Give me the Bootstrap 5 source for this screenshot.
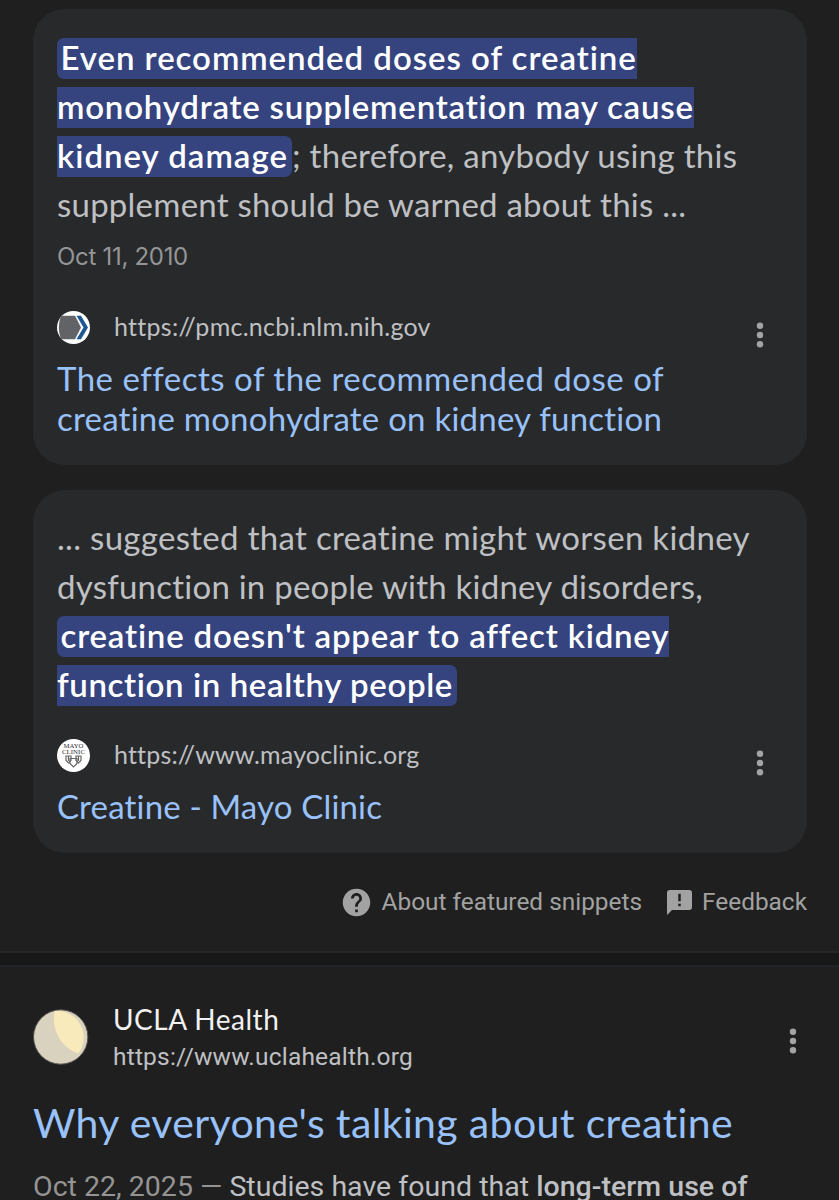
<!DOCTYPE html>
<html lang="en" data-bs-theme="dark">
<head>
<meta charset="utf-8">
<meta name="viewport" content="width=device-width, initial-scale=1">
<title>Search results</title>
<link href="https://cdn.jsdelivr.net/npm/bootstrap@5.3.0/dist/css/bootstrap.min.css" rel="stylesheet">
<style>
body{background:#1f1f1f;color:#bfc0c3;font-family:Lato,"Liberation Sans",sans-serif;height:1200px;overflow:hidden}
.wrap{padding:9px 32px 0 33px}
.snippet{background:#28292b;border:0;border-radius:32px;padding:25px 24px 0 24px;height:456px}
.snippet.short{height:363px;margin-top:25px;padding-top:24px}
.line{height:49px;font-size:33px;white-space:pre}
.line span{height:41px;line-height:39px}
.hl{background:#35447f;color:#fff;font-weight:600}
.hl-start{border-radius:7px 0 0 7px;padding-left:3.5px}
.hl-end{border-radius:0 7px 7px 0;padding-right:4px}
.date{font:400 24px/30px Inter,sans-serif;letter-spacing:-.3px;color:#949597;margin-top:12px;height:30px}
.source{height:33px;font-size:25px;line-height:33px}
.card-one .source{margin-top:39px}
.card-two .source{margin-top:29px}
.source svg.fav{width:33px;height:33px;flex:none}
.source .url{margin-left:24px;position:relative;top:-1px}
.kebab{width:8px;height:26px;fill:#a2a3a5;flex:none}
.source .kebab{margin-right:19px;position:relative;top:7.5px}
.headline{color:#99c1fa;font-size:33px;line-height:40.7px;text-decoration:none;white-space:nowrap;margin-top:13.5px;display:block}
.roboto{font-family:Roboto,sans-serif}
.foot{height:98px;font-size:24.4px;color:#a2a2a2;padding-top:33px;line-height:32px}
.foot svg{fill:#a2a2a2;flex:none}
.foot .gap-q{margin-left:8.5px}
.foot .flag{margin:4px 0 0 24.5px}
.foot .gap-f{margin-left:10.5px}
.sep{height:16px;background:#181818;border-top:2px solid #262626;border-bottom:2px solid #202428}
.result{padding:35px 42px 0 33px}
.result .kebab{position:relative;top:4px}
.site{font-size:28px;line-height:34px;color:#f1f1f1;letter-spacing:.5px}
.site-url{font-size:24.5px;line-height:30px;letter-spacing:.2px;margin-top:6px}
.big{color:#99c1fa;font-size:41px;line-height:50px;text-decoration:none;white-space:nowrap;letter-spacing:.36px;display:block;margin-top:26px}
.desc{font-size:28.5px;line-height:40px;white-space:pre;margin-top:19px;letter-spacing:.02px}
.desc b{font-weight:500}
.dim{color:#949494}
.s1{letter-spacing:.95px}.s2{letter-spacing:.8px}.s3{letter-spacing:1px}.s4{letter-spacing:.28px}.s5{letter-spacing:.23px}.s6{letter-spacing:.5px}.s7{letter-spacing:.17px}.s8{letter-spacing:.8px}.s9{letter-spacing:.62px}.s10{letter-spacing:.31px}
</style>
</head>
<body>
<main>
<div class="wrap">
  <section class="card snippet card-one">
    <div class="line d-flex align-items-center"><span class="hl hl-start s1">Even recommended doses of creatine</span></div>
    <div class="line d-flex align-items-center"><span class="hl s2">monohydrate supplementation may cause</span></div>
    <div class="line d-flex align-items-center"><span class="hl hl-end s3">kidney damage</span><span class="s4">; therefore, anybody using this</span></div>
    <div class="line d-flex align-items-center"><span class="s5">supplement should be warned about this ...</span></div>
    <div class="date">Oct 11, 2010</div>
    <div class="source d-flex align-items-center">
      <svg class="fav" viewBox="0 0 33 33"><circle cx="16.5" cy="16.5" r="16.5" fill="#fff"/><path d="M4 4.7H18L24 16.5L18 28.2H4Q1.8 22.5 1.8 16.5Q1.8 10 4 4.7Z" fill="#626367"/><path d="M19.500 4.7H24L31 16.5L24 28.2H19.500L26.500 16.5Z" fill="#1c5794"/></svg>
      <span class="url s4">https://pmc.ncbi.nlm.nih.gov</span>
      <svg class="kebab ms-auto" viewBox="0 0 8 26"><circle cx="4" cy="3.7" r="3.2"/><circle cx="4" cy="13" r="3.2"/><circle cx="4" cy="22.3" r="3.2"/></svg>
    </div>
    <a class="headline" href="#"><span class="s6">The effects of the recommended dose of</span><br><span class="s5">creatine monohydrate on kidney function</span></a>
  </section>

  <section class="card snippet short card-two">
    <div class="line d-flex align-items-center"><span class="s10">... suggested that creatine might worsen kidney</span></div>
    <div class="line d-flex align-items-center"><span class="s5">dysfunction in people with kidney disorders,</span></div>
    <div class="line d-flex align-items-center"><span class="hl hl-start s8">creatine doesn't appear to affect kidney</span></div>
    <div class="line d-flex align-items-center"><span class="hl hl-end s9">function in healthy people</span></div>
    <div class="source d-flex align-items-center">
      <svg class="fav" viewBox="0 0 33 33"><circle cx="16.5" cy="16.5" r="16.5" fill="#fff"/><g font-family="Liberation Serif,serif" font-size="7" fill="#333" text-anchor="middle"><text x="16.5" y="9" textLength="20" lengthAdjust="spacingAndGlyphs">MAYO</text><text x="16.5" y="14.8" textLength="23" lengthAdjust="spacingAndGlyphs">CLINIC</text></g><g fill="none" stroke="#666" stroke-width="1.200"><path d="M9 17H14V21.500L11.500 24L9 21.500ZM19 17H24V21.500L21.500 24L19 21.500Z"/><path d="M13 19.500H20V24.500L16.500 28L13 24.500Z"/><path d="M11.500 17V22M21.500 17V22"/></g></svg>
      <span class="url s7">https://www.mayoclinic.org</span>
      <svg class="kebab ms-auto" viewBox="0 0 8 26"><circle cx="4" cy="3.7" r="3.2"/><circle cx="4" cy="13" r="3.2"/><circle cx="4" cy="22.3" r="3.2"/></svg>
    </div>
    <a class="headline s7" href="#">Creatine - Mayo Clinic</a>
  </section>

  <div class="foot roboto d-flex align-items-start justify-content-end">
    <svg width="33" height="33" viewBox="0 0 24 24"><path d="M12 2C6.480 2 2 6.480 2 12s4.480 10 10 10 10-4.480 10-10S17.520 2 12 2zm1 17h-2v-2h2v2zm2.070-7.750l-.9.920C13.450 12.900 13 13.500 13 15h-2v-.5c0-1.100.450-2.100 1.170-2.830l1.240-1.260c.370-.360.590-.860.590-1.410 0-1.100-.9-2-2-2s-2 .9-2 2H8c0-2.210 1.790-4 4-4s4 1.790 4 4c0 .880-.360 1.680-.930 2.250z"/></svg>
    <span class="gap-q">About featured snippets</span>
    <svg class="flag" width="25" height="25" viewBox="0 0 20 20"><path d="M18 0H2C.9 0 0 .9 0 2V20L4 16H18c1.100 0 2-.9 2-2V2c0-1.100-.9-2-2-2zM11 13H9V11h2zm0-4H9V3h2z"/></svg>
    <span class="gap-f">Feedback</span>
  </div>
</div>
<div class="sep"></div>
<section class="result">
  <div class="d-flex align-items-center">
    <svg width="56" height="56" viewBox="0 0 56 56"><circle cx="27.700" cy="28" r="27.200" fill="#d9d2bf" stroke="#514f49"/><path d="M21.500 2A26.700 26.700 0 0 1 45.500 44.500C29 39 18 22 21.500 2Z" fill="#f9eabb"/></svg>
    <div class="site-text ms-4"><div class="site">UCLA Health</div><div class="site-url roboto">https://www.uclahealth.org</div></div>
    <svg class="kebab ms-auto" viewBox="0 0 8 26"><circle cx="4" cy="3.7" r="3.2"/><circle cx="4" cy="13" r="3.2"/><circle cx="4" cy="22.3" r="3.2"/></svg>
  </div>
  <a class="big" href="#">Why everyone's talking about creatine</a>
  <div class="desc roboto"><span class="dim">Oct 22, 2025 — </span>Studies have found that <b>long-term use of</b></div>
</section>
</main>
<script src="https://cdn.jsdelivr.net/npm/bootstrap@5.3.0/dist/js/bootstrap.bundle.min.js"></script>
</body>
</html>
